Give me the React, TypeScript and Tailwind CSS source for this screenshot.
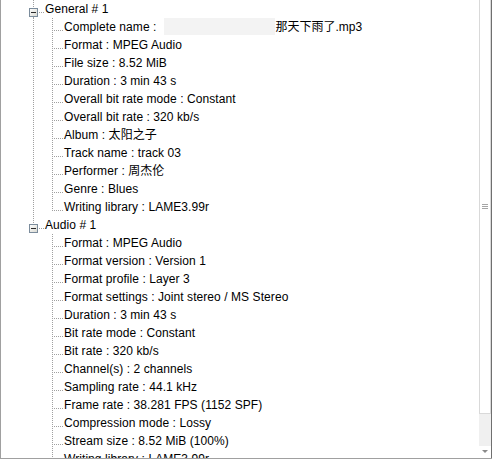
const DOT = "#a0a0a0";

type Node = { label: string; value?: string; redacted?: string };

const general: Node[] = [
  { label: "Complete name", redacted: "那天下雨了.mp3" },
  { label: "Format", value: "MPEG Audio" },
  { label: "File size", value: "8.52 MiB" },
  { label: "Duration", value: "3 min 43 s" },
  { label: "Overall bit rate mode", value: "Constant" },
  { label: "Overall bit rate", value: "320 kb/s" },
  { label: "Album", value: "太阳之子" },
  { label: "Track name", value: "track 03" },
  { label: "Performer", value: "周杰伦" },
  { label: "Genre", value: "Blues" },
  { label: "Writing library", value: "LAME3.99r" },
];

const audio: Node[] = [
  { label: "Format", value: "MPEG Audio" },
  { label: "Format version", value: "Version 1" },
  { label: "Format profile", value: "Layer 3" },
  { label: "Format settings", value: "Joint stereo / MS Stereo" },
  { label: "Duration", value: "3 min 43 s" },
  { label: "Bit rate mode", value: "Constant" },
  { label: "Bit rate", value: "320 kb/s" },
  { label: "Channel(s)", value: "2 channels" },
  { label: "Sampling rate", value: "44.1 kHz" },
  { label: "Frame rate", value: "38.281 FPS (1152 SPF)" },
  { label: "Compression mode", value: "Lossy" },
  { label: "Stream size", value: "8.52 MiB (100%)" },
  { label: "Writing library", value: "LAME3.99r" },
];

function Dots({ x1, y1, x2, y2 }: { x1: number; y1: number; x2: number; y2: number }) {
  return (
    <line
      x1={x1}
      y1={y1}
      x2={x2}
      y2={y2}
      stroke={DOT}
      strokeWidth={1}
      strokeDasharray="1 1"
      shapeRendering="crispEdges"
    />
  );
}

function GroupRow({ title, hasNext }: { title: string; hasNext: boolean }) {
  return (
    <div className="flex h-[18px] items-start">
      <svg width={44} height={18} className="shrink-0">
        <Dots x1={32.5} y1={0} x2={32.5} y2={8} />
        {hasNext && <Dots x1={32.5} y1={17} x2={32.5} y2={18} />}
        <defs>
          <linearGradient id="box" x1="0" y1="0" x2="1" y2="1">
            <stop offset="0" stopColor="#ffffff" />
            <stop offset="1" stopColor="#d8d8d0" />
          </linearGradient>
        </defs>
        <rect x={28.5} y={8.5} width={8} height={8} fill="url(#box)" stroke="#7b8c9c" shapeRendering="crispEdges" />
        <line x1={30} y1={12.5} x2={35} y2={12.5} stroke="#2a2a2a" shapeRendering="crispEdges" />
        <Dots x1={38} y1={12.5} x2={44} y2={12.5} />
      </svg>
      <span className="whitespace-nowrap text-[12px] leading-[19px] tracking-[0.07px] text-black">{title}</span>
    </div>
  );
}

function LeafRow({ node, rootLine, last }: { node: Node; rootLine: boolean; last: boolean }) {
  return (
    <div className="flex h-[18px] items-start">
      <svg width={63} height={18} className="shrink-0">
        {rootLine && <Dots x1={32.5} y1={0} x2={32.5} y2={18} />}
        <Dots x1={51.5} y1={0} x2={51.5} y2={last ? 13 : 18} />
        <Dots x1={53} y1={12.5} x2={62} y2={12.5} />
      </svg>
      <span className="whitespace-nowrap text-[12px] leading-[19px] tracking-[0.07px] text-black">
        {node.label} :{node.value ? " " + node.value : ""}
      </span>
      {node.redacted && (
        <>
          <span className="ml-[8px] h-[17px] w-[111px] shrink-0 bg-[#f3f3f3]" />
          <span className="whitespace-nowrap text-[12px] leading-[19px] text-black">{node.redacted}</span>
        </>
      )}
    </div>
  );
}

function ScrollBar() {
  return (
    <div className="flex h-full w-[13px] shrink-0 flex-col border-r border-[#6f6f6f]">
      <div className="flex h-[414px] items-center justify-center border border-t-0 border-[#d9d9d9] bg-white">
        <div className="flex w-[6px] flex-col gap-px">
          <div className="h-px bg-[#a6a6a6]" />
          <div className="h-px bg-[#a6a6a6]" />
          <div className="h-px bg-[#a6a6a6]" />
        </div>
      </div>
      <div className="flex-1 bg-[#f0f0f0]" />
      <div className="flex h-[12px] items-center justify-center bg-white">
        <svg width={6} height={4}>
          <path d="M0 0h6L3 3z" fill="#8a8a8a" />
        </svg>
      </div>
    </div>
  );
}

export default function App() {
  return (
    <div
      className="flex h-[459px] w-[492px] border-b border-l border-[#a0a0a0] bg-white"
      style={{ fontFamily: '"Liberation Sans", Arial, "Noto Sans CJK SC", sans-serif' }}
    >
      <div className="flex-1 overflow-hidden">
        <GroupRow title="General # 1" hasNext />
        {general.map((n, i) => (
          <LeafRow key={"g" + i} node={n} rootLine last={i === general.length - 1} />
        ))}
        <GroupRow title="Audio # 1" hasNext={false} />
        {audio.map((n, i) => (
          <LeafRow key={"a" + i} node={n} rootLine={false} last={false} />
        ))}
      </div>
      <ScrollBar />
    </div>
  );
}
